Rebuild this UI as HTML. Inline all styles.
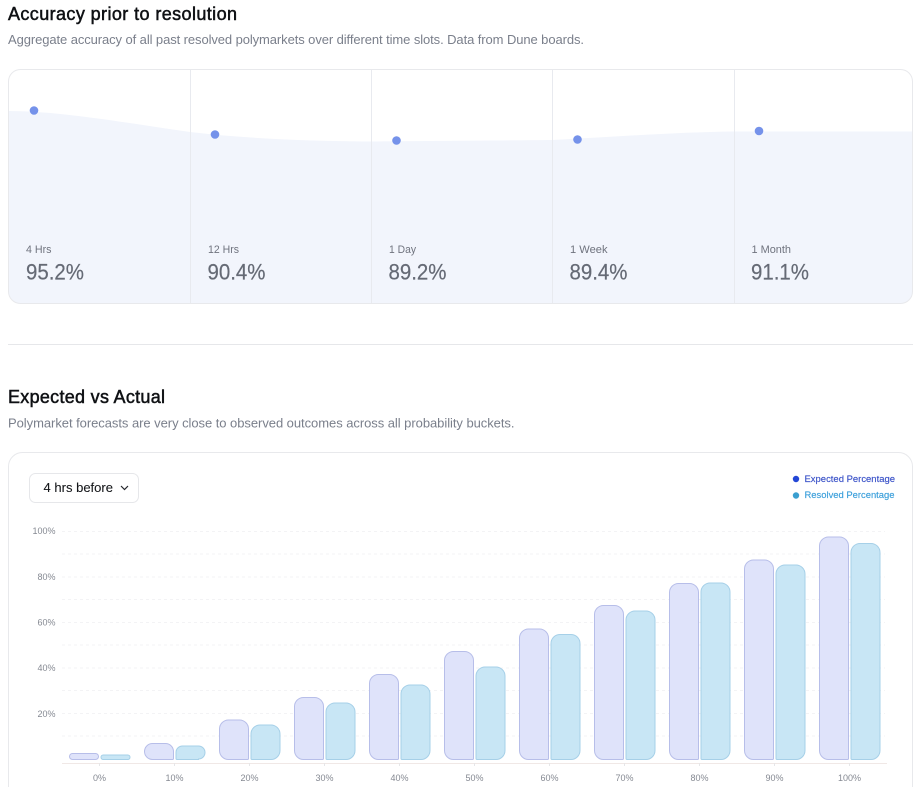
<!DOCTYPE html>
<html lang="en">
<head>
<meta charset="utf-8">
<title>Accuracy prior to resolution</title>
<style>
html,body{margin:0;padding:0;background:#fff;width:913px;height:787px;overflow:hidden}
svg{display:block;font-family:"Liberation Sans",sans-serif}
.grid{stroke:#f3f3f5;stroke-width:1;stroke-dasharray:3 3;fill:none}
.e{fill:#dfe3fa;stroke:#b7bee9;stroke-width:1}
.r{fill:#c8e6f5;stroke:#a6d0e8;stroke-width:1}
.ax{font-size:9px;fill:#858992}
.lb{font-size:11px;fill:#6f737e}
.val{font-size:22px;fill:#656a75;stroke:#656a75;stroke-width:.2}
.sub{font-size:13px;fill:#7a7f8b}
.h{font-size:18px;fill:#0f1114;stroke:#0f1114;stroke-width:.5}
</style>
</head>
<body>
<svg width="913" height="787" viewBox="0 0 913 787" xmlns="http://www.w3.org/2000/svg">
<text class="h" x="8" y="20" textLength="229" lengthAdjust="spacing">Accuracy prior to resolution</text>
<text class="sub" x="8" y="44" textLength="576" lengthAdjust="spacing">Aggregate accuracy of all past resolved polymarkets over different time slots. Data from Dune boards.</text>

<clipPath id="c1"><rect x="8.500" y="69.500" width="904" height="234" rx="12"/></clipPath>
<g clip-path="url(#c1)">
<path d="M8 111C60 111 120 122 190 132C250 139 310 141 371 141.500L552 140C610 137 680 132 734 131.500L913 131.500V304H8Z" fill="#f2f5fc"/>
<path d="M190.500 69V304M371.500 69V304M552.500 69V304M734.500 69V304" stroke="#e8eaef" stroke-width="1" fill="none"/>
</g>
<rect x="8.500" y="69.500" width="904" height="234" rx="12" fill="none" stroke="#e8e9ec"/>
<g fill="#7592ea">
<circle cx="34" cy="110.500" r="4.300"/><circle cx="215" cy="134.500" r="4.300"/><circle cx="396.500" cy="140.500" r="4.300"/><circle cx="577.500" cy="139.500" r="4.300"/><circle cx="759" cy="131" r="4.300"/>
</g>
<text class="lb" x="26" y="253" textLength="25.500" lengthAdjust="spacingAndGlyphs">4 Hrs</text>
<text class="lb" x="208" y="253" textLength="31" lengthAdjust="spacingAndGlyphs">12 Hrs</text>
<text class="lb" x="389" y="253" textLength="27" lengthAdjust="spacingAndGlyphs">1 Day</text>
<text class="lb" x="570" y="253" textLength="37.500" lengthAdjust="spacingAndGlyphs">1 Week</text>
<text class="lb" x="751.500" y="253" textLength="39.500" lengthAdjust="spacingAndGlyphs">1 Month</text>
<text class="val" x="26" y="279.500" textLength="58" lengthAdjust="spacingAndGlyphs">95.2%</text>
<text class="val" x="207.500" y="279.500" textLength="58" lengthAdjust="spacingAndGlyphs">90.4%</text>
<text class="val" x="388.500" y="279.500" textLength="58" lengthAdjust="spacingAndGlyphs">89.2%</text>
<text class="val" x="569.500" y="279.500" textLength="58" lengthAdjust="spacingAndGlyphs">89.4%</text>
<text class="val" x="751" y="279.500" textLength="58" lengthAdjust="spacingAndGlyphs">91.1%</text>

<path d="M8 344.500H913" stroke="#e6e7ea" fill="none"/>

<text class="h" x="8" y="403" textLength="157" lengthAdjust="spacing">Expected vs Actual</text>
<text class="sub" x="8" y="427.500" textLength="506.500" lengthAdjust="spacing">Polymarket forecasts are very close to observed outcomes across all probability buckets.</text>

<rect x="8.500" y="452.500" width="904" height="360" rx="14" fill="#fff" stroke="#e8e9ec"/>

<rect x="29.500" y="473.500" width="109" height="29" rx="6" fill="#fff" stroke="#e6e7ea"/>
<text x="43.500" y="492" font-size="13" fill="#15171a" stroke="#15171a" stroke-width=".1" textLength="69.500" lengthAdjust="spacing">4 hrs before</text>
<path d="M121 486l3.500 3.500 3.500-3.500" fill="none" stroke="#25282d" stroke-width="1.200"/>

<circle cx="796" cy="479" r="3.200" fill="#2347d6"/>
<text x="804.500" y="482" font-size="9" fill="#3a52c8" stroke="#3a52c8" stroke-width=".15" textLength="90.500" lengthAdjust="spacingAndGlyphs">Expected Percentage</text>
<circle cx="796" cy="495.500" r="3.200" fill="#3a9fd0"/>
<text x="804.500" y="498" font-size="9" fill="#3b9fdb" stroke="#3b9fdb" stroke-width=".15" textLength="90" lengthAdjust="spacingAndGlyphs">Resolved Percentage</text>

<g class="grid">
<path d="M62 531.500H885"/><path d="M62 554H885"/><path d="M62 577H885"/><path d="M62 599.500H885"/><path d="M62 622.500H885"/><path d="M62 645H885"/><path d="M62 668H885"/><path d="M62 690.500H885"/><path d="M62 713.500H885"/><path d="M62 736H885"/>
</g>
<path d="M62 763.500H887" stroke="#f0e8e6" fill="none"/>
<path d="M99.500 763v3M174.500 763v3M249.500 763v3M324.500 763v3M399.500 763v3M474.500 763v3M549.500 763v3M624.500 763v3M699.500 763v3M774.500 763v3M849.500 763v3" stroke="#e6e6e8" fill="none"/>

<g text-anchor="end" class="ax">
<text x="55.500" y="534">100%</text><text x="55.500" y="580">80%</text><text x="55.500" y="625.500">60%</text><text x="55.500" y="671">40%</text><text x="55.500" y="717">20%</text>
</g>
<g text-anchor="middle" class="ax">
<text x="99.500" y="781">0%</text><text x="174.500" y="781">10%</text><text x="249.500" y="781">20%</text><text x="324.500" y="781">30%</text><text x="399.500" y="781">40%</text><text x="474.500" y="781">50%</text><text x="549.500" y="781">60%</text><text x="624.500" y="781">70%</text><text x="699.500" y="781">80%</text><text x="774.500" y="781">90%</text><text x="849.500" y="781">100%</text>
</g>

<rect class="e" x="69.500" y="753.500" width="29" height="6" rx="3"/>
<rect class="r" x="101" y="755" width="29" height="4.500" rx="2.200"/>

<path class="e" d="M144.500 751.500a8 8 0 0 1 8-8h13a8 8 0 0 1 8 8v7a1 1 0 0 1-1 1h-20a8 8 0 0 1-8-8z"/>
<path class="r" d="M176 758.500V752.500a6.500 6.500 0 0 1 6.500-6.500h16a6.500 6.500 0 0 1 6.500 6.500a6.500 6.500 0 0 1-6.500 6.500v.5H177a1 1 0 0 1-1-1z"/>

<g transform="translate(150 0)"><path class="e" d="M69.500 750.500V729a9 9 0 0 1 9-9h11a9 9 0 0 1 9 9V758.500a1 1 0 0 1-1 1H78.500a9 9 0 0 1-9-9z"/><path class="r" d="M101 758.500V734a9 9 0 0 1 9-9h11a9 9 0 0 1 9 9V750.500a9 9 0 0 1-9 9H102a1 1 0 0 1-1-1z"/></g>
<g transform="translate(225 0)"><path class="e" d="M69.500 750.500V706.500a9 9 0 0 1 9-9h11a9 9 0 0 1 9 9V758.500a1 1 0 0 1-1 1H78.500a9 9 0 0 1-9-9z"/><path class="r" d="M101 758.500V712a9 9 0 0 1 9-9h11a9 9 0 0 1 9 9V750.500a9 9 0 0 1-9 9H102a1 1 0 0 1-1-1z"/></g>
<g transform="translate(300 0)"><path class="e" d="M69.500 750.500V683.500a9 9 0 0 1 9-9h11a9 9 0 0 1 9 9V758.500a1 1 0 0 1-1 1H78.500a9 9 0 0 1-9-9z"/><path class="r" d="M101 758.500V694a9 9 0 0 1 9-9h11a9 9 0 0 1 9 9V750.500a9 9 0 0 1-9 9H102a1 1 0 0 1-1-1z"/></g>
<g transform="translate(375 0)"><path class="e" d="M69.500 750.500V660.500a9 9 0 0 1 9-9h11a9 9 0 0 1 9 9V758.500a1 1 0 0 1-1 1H78.500a9 9 0 0 1-9-9z"/><path class="r" d="M101 758.500V676a9 9 0 0 1 9-9h11a9 9 0 0 1 9 9V750.500a9 9 0 0 1-9 9H102a1 1 0 0 1-1-1z"/></g>
<g transform="translate(450 0)"><path class="e" d="M69.500 750.500V638a9 9 0 0 1 9-9h11a9 9 0 0 1 9 9V758.500a1 1 0 0 1-1 1H78.500a9 9 0 0 1-9-9z"/><path class="r" d="M101 758.500V643.500a9 9 0 0 1 9-9h11a9 9 0 0 1 9 9V750.500a9 9 0 0 1-9 9H102a1 1 0 0 1-1-1z"/></g>
<g transform="translate(525 0)"><path class="e" d="M69.500 750.500V614.500a9 9 0 0 1 9-9h11a9 9 0 0 1 9 9V758.500a1 1 0 0 1-1 1H78.500a9 9 0 0 1-9-9z"/><path class="r" d="M101 758.500V620a9 9 0 0 1 9-9h11a9 9 0 0 1 9 9V750.500a9 9 0 0 1-9 9H102a1 1 0 0 1-1-1z"/></g>
<g transform="translate(600 0)"><path class="e" d="M69.500 750.500V592.500a9 9 0 0 1 9-9h11a9 9 0 0 1 9 9V758.500a1 1 0 0 1-1 1H78.500a9 9 0 0 1-9-9z"/><path class="r" d="M101 758.500V592a9 9 0 0 1 9-9h11a9 9 0 0 1 9 9V750.500a9 9 0 0 1-9 9H102a1 1 0 0 1-1-1z"/></g>
<g transform="translate(675 0)"><path class="e" d="M69.500 750.500V569a9 9 0 0 1 9-9h11a9 9 0 0 1 9 9V758.500a1 1 0 0 1-1 1H78.500a9 9 0 0 1-9-9z"/><path class="r" d="M101 758.500V574a9 9 0 0 1 9-9h11a9 9 0 0 1 9 9V750.500a9 9 0 0 1-9 9H102a1 1 0 0 1-1-1z"/></g>
<g transform="translate(750 0)"><path class="e" d="M69.500 750.500V546a9 9 0 0 1 9-9h11a9 9 0 0 1 9 9V758.500a1 1 0 0 1-1 1H78.500a9 9 0 0 1-9-9z"/><path class="r" d="M101 758.500V552.500a9 9 0 0 1 9-9h11a9 9 0 0 1 9 9V750.500a9 9 0 0 1-9 9H102a1 1 0 0 1-1-1z"/></g>
</svg>
</body>
</html>
